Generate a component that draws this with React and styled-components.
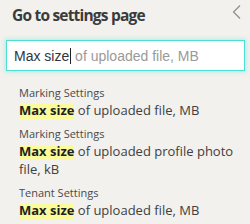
import React from "react";
import styled, { createGlobalStyle } from "styled-components";

const Global = createGlobalStyle`
  html, body { margin: 0; padding: 0; background: #f2f1ee; }
  body { width: 250px; height: 224px; overflow: hidden; }
`;

const Panel = styled.div`
  width: 250px;
  height: 224px;
  background: #f2f1ee;
  box-sizing: border-box;
  padding-top: 4px;
  font-family: "Open Sans", sans-serif;
`;

const Header = styled.div`
  display: flex;
  align-items: flex-start;
  justify-content: space-between;
  padding: 0 9px 0 12px;
`;

const Title = styled.h1`
  margin: 0;
  font-family: "Open Sans", sans-serif;
  font-size: 15.5px;
  line-height: 22px;
  font-weight: 700;
  letter-spacing: -0.8px;
  color: #3b3b3b;
`;

const CloseButton = styled.button`
  border: none;
  background: none;
  padding: 0;
  margin-top: 1px;
  width: 9px;
  height: 14px;
  display: flex;
  cursor: pointer;
`;

const SearchBox = styled.div`
  margin: 14px 5px 0 6px;
  height: 31px;
  box-sizing: border-box;
  border: 1.5px solid #4ddfd2;
  box-shadow: 0 0 4px 1px rgba(77, 223, 210, 0.35);
  background: #fff;
  display: flex;
  align-items: center;
  padding-left: 7px;
  font-family: "Liberation Sans", Arial, sans-serif;
  font-size: 14px;
  white-space: pre;
  overflow: hidden;
`;

const Typed = styled.span`
  color: #2f3640;
`;

const Caret = styled.span`
  display: inline-block;
  width: 1px;
  height: 16px;
  background: #222;
  margin-left: 1px;
`;

const Ghost = styled.span`
  color: #9a9a9a;
`;

const Results = styled.ul`
  list-style: none;
  margin: 0;
  padding: 14px 0 0 19px;
  display: flex;
  flex-direction: column;
  gap: 7px;
`;

const Item = styled.li`
  display: flex;
  flex-direction: column;
  cursor: pointer;
`;

const Category = styled.div`
  font-size: 11px;
  line-height: 16px;
  color: #4a4a4a;
`;

const Name = styled.div`
  font-size: 13px;
  line-height: 18px;
  color: #404040;
  padding-right: 12px;
`;

const Mark = styled.mark`
  display: inline-block;
  background: #fbfb9c;
  color: #1f1f1f;
  font-weight: 700;
  line-height: 12px;
  padding: 0 0 2.5px 0;
`;

const results = [
  { category: "Marking Settings", rest: " of uploaded file, MB" },
  { category: "Marking Settings", rest: " of uploaded profile photo file, kB" },
  { category: "Tenant Settings", rest: " of uploaded file, MB" },
];

export default function App() {
  return (
    <Panel>
      <Global />
      <Header>
        <Title>Go to settings page</Title>
        <CloseButton aria-label="Collapse">
          <svg width="9" height="14" viewBox="0 0 9 14">
            <path d="M8 0.5 L1.5 7 L8 13.5" fill="none" stroke="#8a8a8a" strokeWidth="1.1" />
          </svg>
        </CloseButton>
      </Header>
      <SearchBox>
        <Typed>Max size</Typed>
        <Caret />
        <Ghost> of uploaded file, MB</Ghost>
      </SearchBox>
      <Results>
        {results.map((r, i) => (
          <Item key={i}>
            <Category>{r.category}</Category>
            <Name>
              <Mark>Max size</Mark>
              {r.rest}
            </Name>
          </Item>
        ))}
      </Results>
    </Panel>
  );
}
